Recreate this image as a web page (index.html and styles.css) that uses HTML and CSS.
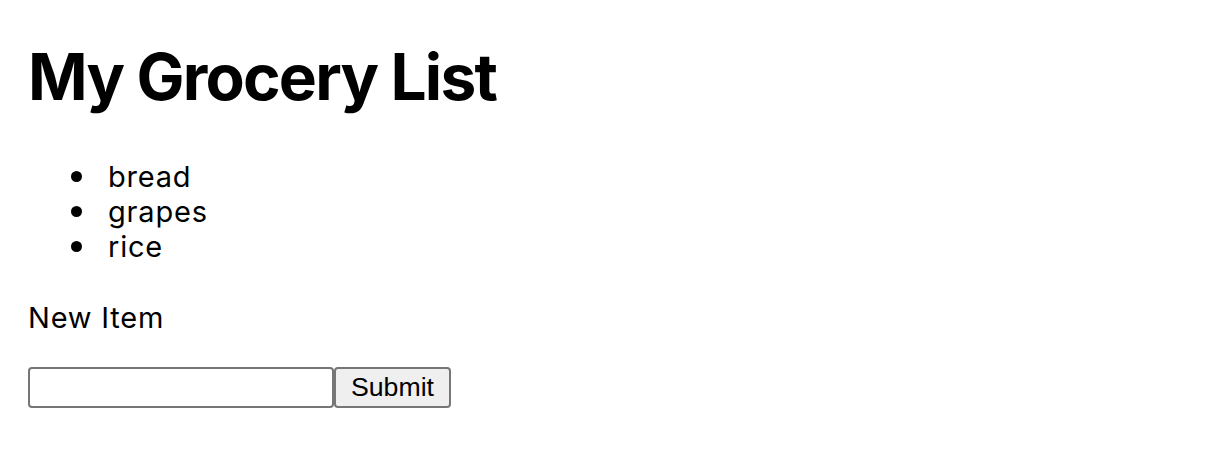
FILE: index.html
```html
<!DOCTYPE html>
<html>
<head>
<meta charset="utf-8">
<link rel="stylesheet" href="styles.css">
</head>
<body>
<div class="page">
  <h1 class="title">My Grocery List</h1>
  <ul class="items">
    <li>bread</li>
    <li>grapes</li>
    <li>rice</li>
  </ul>
  <form class="new-item">
    <label class="label" for="item">New Item</label>
    <div class="row">
      <input class="field" id="item" type="text"><button class="submit" type="button">Submit</button>
    </div>
  </form>
</div>
</body>
</html>
```

FILE: styles.css
```css
html, body {
  margin: 0;
  padding: 0;
  background: #fff;
}
.page {
  padding: 38px 29px 0 29px;
  font-family: Inter, "Liberation Sans", sans-serif;
  font-size: 29px;
  letter-spacing: 0.8px;
  color: #000;
}
.title {
  margin: 0 0 44px -1px;
  font-size: 64px;
  font-weight: 700;
  line-height: 77px;
  letter-spacing: -1.8px;
}
.items {
  margin: 0 0 36px 0;
  padding-left: 80px;
  line-height: 35px;
  list-style: none;
}
.items li {
  display: flex;
  align-items: center;
  margin-left: -1px;
}
.items li::before {
  content: "";
  width: 11px;
  height: 11px;
  border-radius: 50%;
  background: #000;
  margin-left: -37px;
  margin-right: 26px;
  flex: none;
}
.new-item {
  display: flex;
  flex-direction: column;
  gap: 32px;
  align-items: flex-start;
}
.label {
  line-height: 35px;
  margin-left: -1px;
}
.row {
  display: flex;
  margin-left: -1px;
}
.field {
  box-sizing: border-box;
  width: 306px;
  height: 41px;
  border: 2px solid #767676;
  border-radius: 4px;
  margin: 0;
  padding: 2px 4px;
  font-size: 26.67px;
  font-family: "Liberation Sans", Arial, sans-serif;
}
.submit {
  box-sizing: border-box;
  height: 41px;
  width: 117px;
  margin: 0;
  border: 2px solid #767676;
  border-radius: 4px;
  background: #efefef;
  font-size: 26.67px;
  font-family: "Liberation Sans", Arial, sans-serif;
  letter-spacing: 0;
  color: #000;
  padding: 0;
}
```
